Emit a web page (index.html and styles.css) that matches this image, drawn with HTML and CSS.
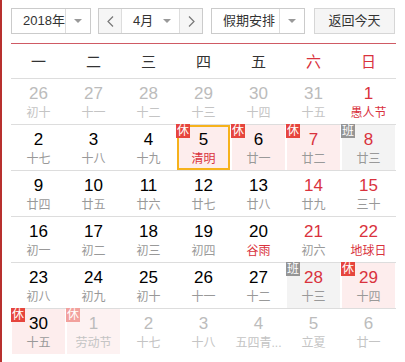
FILE: index.html
```html
<!DOCTYPE html>
<html lang="zh-CN">
<head>
<meta charset="utf-8">
<title>万年历</title>
<link rel="stylesheet" href="styles.css">
</head>
<body>
<div class="cal">
  <div class="toolbar">
    <div class="select year">
      <span class="sel-text">2018年</span>
      <span class="sel-arrow"><i class="caret"></i></span>
    </div>
    <div class="month-group">
      <span class="nav prev"><svg width="7" height="11" viewBox="0 0 7 11"><polyline points="6,0.5 1,5.5 6,10.5" fill="none" stroke="#777" stroke-width="1.2"/></svg></span>
      <span class="month"><span>4月</span><i class="caret"></i></span>
      <span class="nav next"><svg width="7" height="11" viewBox="0 0 7 11"><polyline points="1,0.5 6,5.5 1,10.5" fill="none" stroke="#777" stroke-width="1.2"/></svg></span>
    </div>
    <div class="select holiday">
      <span class="sel-text">假期安排</span>
      <span class="sel-arrow"><i class="caret"></i></span>
    </div>
    <span class="today-btn">返回今天</span>
  </div>

  <div class="weekdays">
    <span>一</span><span>二</span><span>三</span><span>四</span><span>五</span><span class="red">六</span><span class="red">日</span>
  </div>

  <div class="week">
    <div class="day other"><b>26</b><em>初十</em></div>
    <div class="day other"><b>27</b><em>十一</em></div>
    <div class="day other"><b>28</b><em>十二</em></div>
    <div class="day other"><b>29</b><em>十三</em></div>
    <div class="day other"><b>30</b><em>十四</em></div>
    <div class="day other"><b>31</b><em>十五</em></div>
    <div class="day we fest"><b>1</b><em>愚人节</em></div>
  </div>
  <div class="week">
    <div class="day"><b>2</b><em>十七</em></div>
    <div class="day"><b>3</b><em>十八</em></div>
    <div class="day"><b>4</b><em>十九</em></div>
    <div class="day rest today fest"><span class="badge">休</span><b>5</b><em>清明</em></div>
    <div class="day rest"><span class="badge">休</span><b>6</b><em>廿一</em></div>
    <div class="day rest we"><span class="badge">休</span><b>7</b><em>廿二</em></div>
    <div class="day work we"><span class="badge">班</span><b>8</b><em>廿三</em></div>
  </div>
  <div class="week">
    <div class="day"><b>9</b><em>廿四</em></div>
    <div class="day"><b>10</b><em>廿五</em></div>
    <div class="day"><b>11</b><em>廿六</em></div>
    <div class="day"><b>12</b><em>廿七</em></div>
    <div class="day"><b>13</b><em>廿八</em></div>
    <div class="day we"><b>14</b><em>廿九</em></div>
    <div class="day we"><b>15</b><em>三十</em></div>
  </div>
  <div class="week">
    <div class="day"><b>16</b><em>初一</em></div>
    <div class="day"><b>17</b><em>初二</em></div>
    <div class="day"><b>18</b><em>初三</em></div>
    <div class="day"><b>19</b><em>初四</em></div>
    <div class="day fest"><b>20</b><em>谷雨</em></div>
    <div class="day we"><b>21</b><em>初六</em></div>
    <div class="day we fest"><b>22</b><em>地球日</em></div>
  </div>
  <div class="week">
    <div class="day"><b>23</b><em>初八</em></div>
    <div class="day"><b>24</b><em>初九</em></div>
    <div class="day"><b>25</b><em>初十</em></div>
    <div class="day"><b>26</b><em>十一</em></div>
    <div class="day"><b>27</b><em>十二</em></div>
    <div class="day work we"><span class="badge">班</span><b>28</b><em>十三</em></div>
    <div class="day rest we"><span class="badge">休</span><b>29</b><em>十四</em></div>
  </div>
  <div class="week last">
    <div class="day rest"><span class="badge">休</span><b>30</b><em>十五</em></div>
    <div class="day rest other"><span class="badge">休</span><b>1</b><em>劳动节</em></div>
    <div class="day other"><b>2</b><em>十七</em></div>
    <div class="day other"><b>3</b><em>十八</em></div>
    <div class="day other"><b>4</b><em>五四青...</em></div>
    <div class="day other"><b>5</b><em>立夏</em></div>
    <div class="day other"><b>6</b><em>廿一</em></div>
  </div>
</div>
</body>
</html>
```

FILE: styles.css
```css
html, body {
  margin: 0;
  padding: 0;
  background: #fff;
}

body {
  font-family: "Liberation Sans", "Noto Sans CJK SC", sans-serif;
  color: #333;
}

.cal {
  box-sizing: border-box;
  min-height: 100vh;
  border-left: 2px solid #b8302e;
  padding: 8px 9px 0 9px;
}

/* ---------- toolbar ---------- */
.toolbar {
  display: flex;
  height: 26px;
  font-size: 13px;
}

.select,
.month-group,
.today-btn {
  box-sizing: border-box;
  height: 26px;
  border: 1px solid #cbcbcb;
  display: flex;
  align-items: stretch;
  background: #fff;
}

.year { width: 80px; }
.holiday { width: 94px; margin-left: 8px; }

.sel-text {
  flex: 1;
  padding-left: 11px;
  line-height: 24px;
  border-right: 1px solid #ddd;
  color: #333;
}

.sel-arrow {
  width: 24px;
  display: flex;
  align-items: center;
  justify-content: center;
}

.caret {
  display: block;
  width: 0;
  height: 0;
  border-left: 4px solid transparent;
  border-right: 4px solid transparent;
  border-top: 4px solid #999;
}

.month-group {
  width: 105px;
  margin-left: 7px;
}

.nav {
  width: 22px;
  background: #f6f6f6;
  display: flex;
  align-items: center;
  justify-content: center;
}

.prev { border-right: 1px solid #ddd; }
.next { border-left: 1px solid #ddd; }

.month {
  flex: 1;
  display: flex;
  align-items: center;
  justify-content: space-between;
  padding: 0 8px 0 11px;
  line-height: 24px;
}

.today-btn {
  width: 81px;
  margin-left: 9px;
  background: #f5f5f5;
  border-color: #d6d6d6;
  justify-content: center;
  line-height: 24px;
  color: #333;
}

/* ---------- weekday header ---------- */
.weekdays {
  margin-top: 9px;
  border-top: 1px solid #cf5a64;
  border-bottom: 1px solid #ddd;
  display: grid;
  grid-template-columns: repeat(7, 55px);
  height: 34px;
  font-size: 15px;
  line-height: 35px;
  text-align: center;
  color: #333;
}

.weekdays .red { color: #d9323d; }

/* ---------- day grid ---------- */
.week {
  display: grid;
  grid-template-columns: repeat(7, 55px);
  border-bottom: 1px solid #ddd;
}

.week.last { border-bottom: none; }

.day {
  position: relative;
  box-sizing: border-box;
  height: 45px;
  margin: 0 1px;
  padding-top: 5px;
  text-align: center;
}

.day b {
  display: block;
  font-weight: normal;
  font-size: 17px;
  line-height: 20px;
  color: #000;
}

.day em {
  display: block;
  font-style: normal;
  font-size: 12px;
  line-height: 16px;
  margin-top: 1px;
  color: #999;
  white-space: nowrap;
}

.day.we b { color: #d9323d; }
.day.fest em { color: #d9323d; }

.day.other b { color: #bcbcbc; }
.day.other em { color: #c4c4c4; }

.day.rest { background: #fdeded; }
.day.work { background: #f3f3f3; }
.day.rest.other { background: #fdf2f2; }

.day.today {
  border: 2px solid #f6b21c;
  padding-top: 3px;
}

.badge {
  position: absolute;
  left: -1px;
  top: -1px;
  width: 14px;
  height: 14px;
  font-size: 12px;
  line-height: 14px;
  text-align: center;
  color: #fff;
  background: #e6453d;
}

.day.today .badge {
  left: -3px;
  top: -3px;
}

.day.work .badge { background: #959595; }
.day.rest.other .badge { background: #f2a19d; }
```
